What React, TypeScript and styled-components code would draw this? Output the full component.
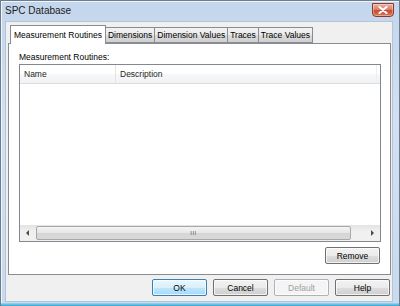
import styled, { createGlobalStyle } from "styled-components";

const GlobalStyle = createGlobalStyle`
  html, body {
    margin: 0;
    padding: 0;
    background: #fff;
  }
  body {
    font-family: "Liberation Sans", Arial, sans-serif;
    font-size: 8.5px;
    color: #000;
  }
`;

const tabs = ["Measurement Routines", "Dimensions", "Dimension Values", "Traces", "Trace Values"];

export default function App() {
  return (
    <>
      <GlobalStyle />
      <Window>
        <TitleBar>
          <Title>SPC Database</Title>
          <CloseButton>
            <svg width="10" height="8" viewBox="0 0 10 8">
              <path d="M1.5 1 L8.5 7 M8.5 1 L1.5 7" stroke="#fff" strokeWidth="2" strokeLinecap="round" />
            </svg>
          </CloseButton>
        </TitleBar>
        <Client>
          <TabStrip>
            {tabs.map((t, i) => (
              <Tab key={t} active={i === 0}>
                {t}
              </Tab>
            ))}
          </TabStrip>
          <Panel>
            <Label>Measurement Routines:</Label>
            <ListBox>
              <ListHeader>
                <HeaderCell width={96} divider>
                  Name
                </HeaderCell>
                <HeaderCell width={110}>Description</HeaderCell>
                <HeaderFill />
              </ListHeader>
              <ListBody />
              <HScroll>
                <ScrollArrow>
                  <svg width="4" height="6" viewBox="0 0 4 6">
                    <path d="M3 0 L0 3 L3 6 Z" fill="#4d4d4d" />
                  </svg>
                </ScrollArrow>
                <Thumb>
                  <Grip>III</Grip>
                </Thumb>
                <TrackGap />
                <ScrollArrow>
                  <svg width="4" height="6" viewBox="0 0 4 6">
                    <path d="M1 0 L4 3 L1 6 Z" fill="#4d4d4d" />
                  </svg>
                </ScrollArrow>
              </HScroll>
            </ListBox>
            <PanelActions>
              <Button>Remove</Button>
            </PanelActions>
          </Panel>
          <DialogActions>
            <Button variant="default">OK</Button>
            <Button>Cancel</Button>
            <Button disabled>Default</Button>
            <Button>Help</Button>
          </DialogActions>
        </Client>
      </Window>
    </>
  );
}

const Window = styled.div`
  width: 400px;
  height: 306px;
  box-sizing: border-box;
  display: flex;
  flex-direction: column;
  border: 1px solid #6d7c8e;
  border-bottom: none;
  background: linear-gradient(to bottom, #c4d6ec 0%, #d2e0f1 40%, #c9daee 100%);
  box-shadow: inset 1px 1px 0 #eef4fb;
  position: relative;

  &::after {
    content: "";
    position: absolute;
    left: 0;
    right: 0;
    bottom: 0;
    height: 3px;
    background: linear-gradient(to bottom, #9fd8ee, #2ea7d6);
  }
`;

const TitleBar = styled.div`
  height: 20px;
  display: flex;
  align-items: flex-start;
  justify-content: space-between;
  padding: 0 5px 0 4px;
`;

const Title = styled.div`
  font-size: 10px;
  margin-top: 4px;
  color: #1b1b1b;
`;

const CloseButton = styled.div`
  width: 22px;
  height: 14px;
  margin-top: 2px;
  box-sizing: border-box;
  border: 1px solid #8a3a2c;
  border-radius: 0 0 4px 4px;
  background: linear-gradient(to bottom, #ecb0a2 0%, #dd8068 45%, #c84b30 55%, #d97b5f 100%);
  box-shadow: inset 0 0 0 1px rgba(255, 255, 255, 0.35);
  display: flex;
  align-items: center;
  justify-content: center;
`;

const Client = styled.div`
  flex: 1;
  margin: 0 6px 4px 4px;
  background: #f0f0f0;
  border: 1px solid #b4c3d5;
  display: flex;
  flex-direction: column;
  padding: 2px 1px 0 2px;
  min-height: 0;
`;

const TabStrip = styled.div`
  display: flex;
  align-items: flex-end;
  height: 19px;
  padding-left: 2px;
  position: relative;
  z-index: 1;
`;

const Tab = styled.div<{ active?: boolean }>`
  box-sizing: border-box;
  display: flex;
  align-items: center;
  padding: 0 ${(p) => (p.active ? 3 : 2)}px;
  height: ${(p) => (p.active ? 19 : 16)}px;
  margin-bottom: ${(p) => (p.active ? -1 : 0)}px;
  margin-right: -1px;
  border: 1px solid #898c95;
  border-bottom: ${(p) => (p.active ? "none" : "1px solid #898c95")};
  background: ${(p) =>
    p.active ? "#fff" : "linear-gradient(to bottom, #f2f2f2 0%, #ebebeb 50%, #dddddd 51%, #cfcfcf 100%)"};
  white-space: nowrap;
  position: relative;
  z-index: ${(p) => (p.active ? 2 : 1)};
`;

const Panel = styled.div`
  flex: 1;
  background: #fff;
  border: 1px solid #898c95;
  display: flex;
  flex-direction: column;
  padding: 8px 9px 10px 10px;
  min-height: 0;
`;

const Label = styled.div`
  height: 12px;
`;

const ListBox = styled.div`
  flex: 1;
  border: 1px solid #828790;
  display: flex;
  flex-direction: column;
  min-height: 0;
`;

const ListHeader = styled.div`
  display: flex;
  height: 18px;
  background: linear-gradient(to bottom, #ffffff 0%, #ffffff 50%, #f7f8fa 51%, #f1f2f4 100%);
  border-bottom: 1px solid #dcdde0;
`;

const HeaderCell = styled.div<{ width: number; divider?: boolean }>`
  width: ${(p) => p.width}px;
  box-sizing: border-box;
  padding-left: 4px;
  display: flex;
  align-items: center;
  border-right: 1px solid ${(p) => (p.divider ? "#e3e4e6" : "transparent")};
  white-space: nowrap;
  color: #1e1e1e;
`;

const HeaderFill = styled.div`
  flex: 1;
  margin-right: 3px;
  border-right: 1px solid #eceef0;
`;

const ListBody = styled.div`
  flex: 1;
  background: #fff;
`;

const HScroll = styled.div`
  display: flex;
  height: 16px;
  background: linear-gradient(to bottom, #e3e3e3, #f0f0f0 40%, #f0f0f0);
`;

const ScrollArrow = styled.div`
  width: 16px;
  display: flex;
  align-items: center;
  justify-content: center;
`;

const Thumb = styled.div`
  width: 315px;
  margin: 1px 0;
  box-sizing: border-box;
  border: 1px solid #a8a8a8;
  border-radius: 2px;
  background: linear-gradient(to bottom, #f4f4f4 0%, #e6e6e6 50%, #d6d6d6 51%, #d8d8d8 100%);
  display: flex;
  align-items: center;
  justify-content: center;
`;

const Grip = styled.span`
  font-size: 6px;
  letter-spacing: 0.5px;
  color: #555;
`;

const TrackGap = styled.div`
  flex: 1;
`;

const PanelActions = styled.div`
  display: flex;
  justify-content: flex-end;
  margin-top: 5px;
  padding-right: 1px;
`;

const DialogActions = styled.div`
  display: flex;
  justify-content: flex-end;
  gap: 6px;
  padding: 4px 1px 5px 0;
`;

const Button = styled.button<{ variant?: "default" }>`
  width: 55px;
  height: 17px;
  padding: 0;
  font-family: inherit;
  font-size: 8.5px;
  color: #000;
  border-radius: 2px;
  border: 1px solid ${(p) => (p.variant === "default" ? "#3c7fb1" : "#707070")};
  background: ${(p) =>
    p.variant === "default"
      ? "linear-gradient(to bottom, #eaf6fd 0%, #d9f0fc 50%, #bee6fd 51%, #a7d9f5 100%)"
      : "linear-gradient(to bottom, #f2f2f2 0%, #ebebeb 50%, #dddddd 51%, #cfcfcf 100%)"};
  box-shadow: inset 0 0 0 1px rgba(255, 255, 255, 0.7);

  &:disabled {
    color: #a0a0a0;
    border-color: #adb2b5;
    background: #f4f4f4;
  }
`;
